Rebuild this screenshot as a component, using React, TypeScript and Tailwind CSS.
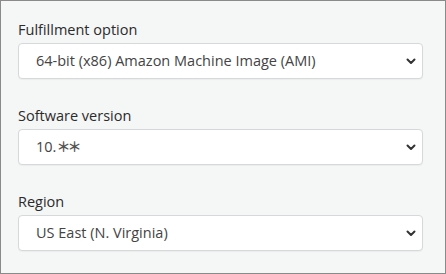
const fields = [
  { label: 'Fulfillment option', value: '64-bit (x86) Amazon Machine Image (AMI)' },
  { label: 'Software version', value: '10.', stars: true },
  { label: 'Region', value: 'US East (N. Virginia)' },
];

function Chevron() {
  return (
    <svg width="10" height="7" viewBox="0 0 10 7" className="shrink-0">
      <path d="M1.5 1.5 L5 5 L8.5 1.5" fill="none" stroke="#333" strokeWidth="2" strokeLinecap="round" strokeLinejoin="round" />
    </svg>
  );
}

export default function App() {
  return (
    <div
      className="w-[446px] h-[274px] bg-[#f5f6f6] border border-[#8a8a8a] box-border pt-[19px] pl-[17px] pr-[22px] flex flex-col gap-[27px]"
      style={{ fontFamily: '"Open Sans", "Noto Sans", sans-serif' }}
    >
      {fields.map(f => (
        <div key={f.label} className="flex flex-col gap-[3px]">
          <label className="text-[14.5px] leading-[20px] text-[#2b2b2b]">{f.label}</label>
          <div className="h-[36px] bg-white border border-[#d5d9d9] rounded-[4px] flex items-center pl-[17px] pr-[6px] shadow-[0_1px_1px_rgba(0,0,0,0.04)]">
            <span className="flex-1 text-[14.5px] text-[#444]">
              {f.value}
              {f.stars && (
                <span className="text-[14px] text-[#555] font-bold tracking-[-3px]" style={{ fontFamily: '"Noto Sans CJK JP", sans-serif' }}>＊＊</span>
              )}
            </span>
            <Chevron />
          </div>
        </div>
      ))}
    </div>
  );
}
